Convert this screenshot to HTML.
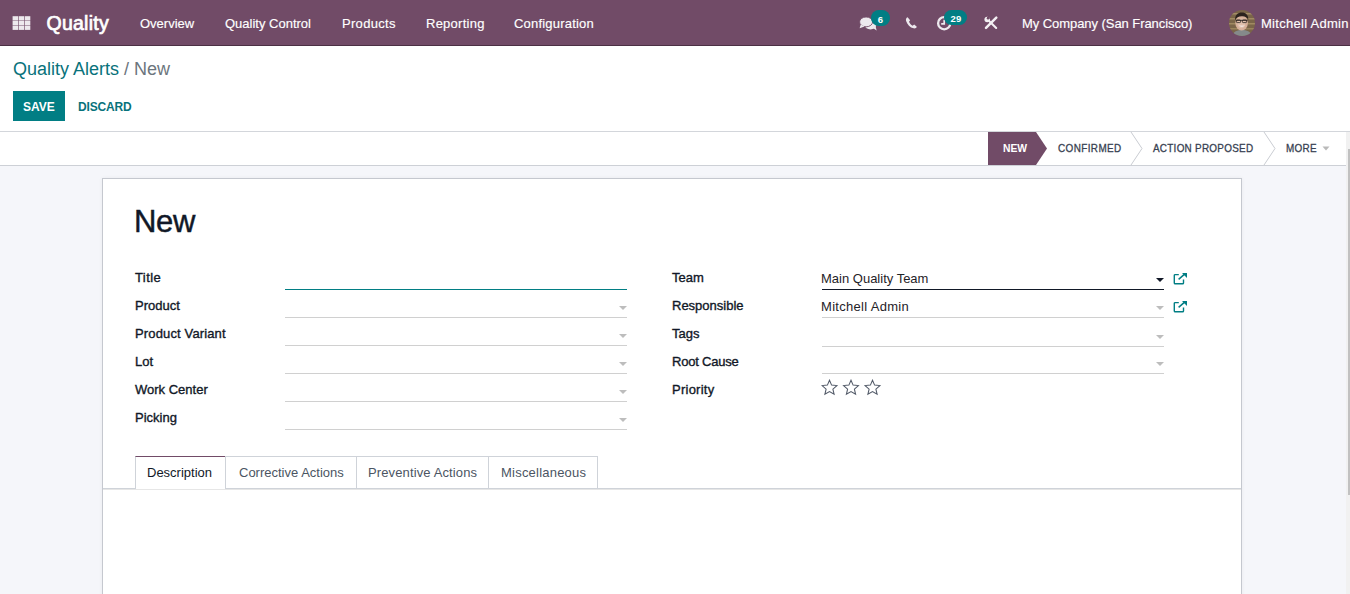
<!DOCTYPE html>
<html><head><meta charset="utf-8">
<style>
html,body{margin:0;padding:0;width:1350px;height:594px;overflow:hidden;background:#fff;font-family:"Liberation Sans",sans-serif;}
.a{position:absolute;}
.t{position:absolute;line-height:1;white-space:nowrap;}
#nav{left:0;top:0;width:1350px;height:45px;background:#714B67;border-bottom:1px solid #4b3044;}
.nv{color:#fff;font-size:13px;top:17px;-webkit-text-stroke:0.15px #fff;}
#cp{left:0;top:46px;width:1350px;height:85px;background:#fff;border-bottom:1px solid #d3d6db;}
#sb{left:0;top:132px;width:1346px;height:33px;background:#fff;border-bottom:1px solid #cdd0d6;}
#bg{left:0;top:166px;width:1346px;height:428px;background:#f5f6fa;}
#track{left:1346px;top:132px;width:4px;height:462px;background:#f1f1f1;}
#thumb{left:1348px;top:149px;width:2px;height:346px;background:#c1c1c1;}
#sheet{left:102px;top:178px;width:1138px;height:420px;background:#fff;border:1px solid #c5c8cf;box-shadow:0 0 4px rgba(0,0,0,0.05);}
.lbl{font-size:13px;font-weight:400;color:#111827;-webkit-text-stroke:0.35px #111827;}
.ln{position:absolute;height:1px;background:#d0d0d0;}
.car{position:absolute;width:0;height:0;border-left:4px solid transparent;border-right:4px solid transparent;border-top:4px solid #bdbdbd;}
.val{font-size:13px;color:#1f2328;}
.tab{position:absolute;top:456px;height:32px;border:1px solid #cfd3d9;border-bottom:none;box-sizing:border-box;background:#fff;}
.tabt{font-size:13px;color:#4b5563;}
.st{font-size:11px;color:#374151;letter-spacing:0.3px;-webkit-text-stroke:0.3px #374151;transform:scaleX(0.9);transform-origin:0 0;}
</style></head><body>

<!-- NAVBAR -->
<div id="nav" class="a"></div>
<!-- grid icon -->
<svg class="a" style="left:0;top:0" width="40" height="40" viewBox="0 0 40 40"><g fill="#ede9ed"><rect x="12.6" y="16.2" width="5.5" height="4.3"/><rect x="18.7" y="16.2" width="5.5" height="4.3"/><rect x="24.8" y="16.2" width="5.5" height="4.3"/><rect x="12.6" y="20.9" width="5.5" height="4.3"/><rect x="18.7" y="20.9" width="5.5" height="4.3"/><rect x="24.8" y="20.9" width="5.5" height="4.3"/><rect x="12.6" y="25.6" width="5.5" height="4.3"/><rect x="18.7" y="25.6" width="5.5" height="4.3"/><rect x="24.8" y="25.6" width="5.5" height="4.3"/></g></svg>
<div class="t" style="left:46.5px;top:14px;font-size:19.5px;font-weight:400;color:#fff;-webkit-text-stroke:0.7px #fff;letter-spacing:0.25px">Quality</div>
<div class="t nv" style="left:140px;">Overview</div>
<div class="t nv" style="left:225px;">Quality Control</div>
<div class="t nv" style="left:342px;letter-spacing:0.3px">Products</div>
<div class="t nv" style="left:426px;letter-spacing:0.25px">Reporting</div>
<div class="t nv" style="left:514px;letter-spacing:0.2px">Configuration</div>


<!-- nav icons -->
<svg class="a" style="left:855px;top:6px" width="150" height="30" viewBox="855 6 150 30">
<!-- comments -->
<g fill="#ede9ee">
<ellipse cx="870.5" cy="25.6" rx="5.6" ry="3.9"/>
<path d="M872.5,27.8 L876.6,30.4 L875.6,26.2 Z"/>
<ellipse cx="866.1" cy="21.9" rx="6.5" ry="4.9" stroke="#714B67" stroke-width="0.9"/>
<path d="M860.8,24.6 L859.6,28.3 L864.6,26.5 Z"/>
</g>
<rect x="871" y="10" width="19" height="16" rx="8" fill="#017E84"/>
<!-- phone -->
<path d="M907.6,17.3 C906.2,17.9 905.6,19.2 906.1,20.9 C907.3,24.6 910,27.4 913.6,28.3 C915.2,28.6 916.4,28 916.8,26.8 L914.2,24.6 L912.6,25.7 C911,25 909.5,23.2 909,21.8 L910.1,20.2 Z" fill="#ede9ee"/>
<!-- clock -->
<circle cx="944.2" cy="23.2" r="6.1" fill="none" stroke="#ede9ee" stroke-width="2.3"/>
<path d="M944.2,19.8 V23.9 H941.2" fill="none" stroke="#ede9ee" stroke-width="1.7"/>
<rect x="944" y="10" width="23" height="15" rx="7.5" fill="#017E84"/>
<!-- tools -->
<path d="M988.6,20.6 L996.2,28" stroke="#f3f0f3" stroke-width="2.1" stroke-linecap="round"/>
<circle cx="987.2" cy="19.6" r="2.75" fill="#f3f0f3"/>
<circle cx="988.1" cy="18.2" r="1.35" fill="#714B67"/>
<path d="M987.6,17.6 L989.4,16.2 L989.6,18.9 Z" fill="#714B67"/>
<path d="M987.6,24.4 L989.6,26.2" stroke="#714B67" stroke-width="1.2"/>
<path d="M996.3,17.6 L986,27.9" stroke="#f3f0f3" stroke-width="2.5" stroke-linecap="round"/>
</svg>
<div class="t" style="left:877.8px;top:14.8px;font-size:9.5px;font-weight:700;color:#fff;">6</div>
<div class="t" style="left:950.5px;top:14.3px;font-size:9.5px;font-weight:700;color:#fff;letter-spacing:0.1px">29</div>
<!-- avatar -->
<svg class="a" style="left:1229px;top:10px" width="26" height="26" viewBox="0 0 26 26">
<defs><clipPath id="av"><circle cx="13" cy="13" r="13"/></clipPath></defs>
<g clip-path="url(#av)">
<rect width="26" height="26" fill="#7a6548"/>
<rect x="0" y="3" width="26" height="1.5" fill="#a38d66"/>
<rect x="0" y="8" width="26" height="1.5" fill="#a08a62"/>
<rect x="0" y="13" width="26" height="1.5" fill="#a08a62"/>
<rect x="0" y="18" width="26" height="1.5" fill="#9a845c"/>
<path d="M3,27 C4,21.5 8,20 13,20 C18,20 22,21.5 23,27 Z" fill="#858a8b"/>
<ellipse cx="12.6" cy="12.8" rx="6.3" ry="7.6" fill="#d6b09a"/>
<ellipse cx="12.4" cy="13.5" rx="4" ry="5" fill="#e0c0ac"/>
<path d="M6.2,10.5 C5.6,5 9,2.4 12.8,2.4 C16.8,2.4 19.8,4.8 19.2,10.5 C18.6,7.4 16.2,6.2 12.8,6.3 C9.4,6.3 7.2,7.6 6.2,10.5 Z" fill="#2b221d"/>
<path d="M6.8,10.3 H18.6" stroke="#2a2420" stroke-width="0.9"/>
<rect x="7.4" y="10" width="4.2" height="2.6" rx="0.8" fill="none" stroke="#2a2420" stroke-width="0.8"/>
<rect x="13.4" y="10" width="4.2" height="2.6" rx="0.8" fill="none" stroke="#2a2420" stroke-width="0.8"/>
<path d="M9.8,15.6 C11.5,17.4 14.2,17.4 15.8,15.6 Z" fill="#f2e6df"/>
</g>
</svg>
<div class="t nv" style="left:1022px;letter-spacing:-0.06px">My Company (San Francisco)</div>
<div class="t nv" style="left:1261px;letter-spacing:0.28px">Mitchell Admin</div>

<!-- CONTROL PANEL -->
<div id="cp" class="a"></div>
<div class="t" style="left:13px;top:60px;font-size:18px;color:#08727b;">Quality Alerts</div>
<div class="t" style="left:124px;top:60px;font-size:18px;color:#6c757d;">/ New</div>
<div class="a" style="left:13px;top:91px;width:52px;height:30px;background:#017E84;"></div>
<div class="t" style="left:23px;top:101px;font-size:12px;font-weight:700;color:#fff;">SAVE</div>
<div class="t" style="left:78px;top:101px;font-size:12px;font-weight:700;color:#08727b;letter-spacing:-0.15px">DISCARD</div>

<!-- STATUS BAR -->
<div id="sb" class="a"></div>

<!-- statusbar pills -->
<svg class="a" style="left:0;top:132px" width="1346" height="33" viewBox="0 0 1346 33">
<polygon points="988,0 1036,0 1047,16.5 1036,33 988,33" fill="#714B67"/>
<polyline points="1131,0 1142,16.5 1131,33" fill="none" stroke="#c9ccd2" stroke-width="1"/>
<polyline points="1264,0 1275,16.5 1264,33" fill="none" stroke="#c9ccd2" stroke-width="1"/>
<polygon points="1322.5,14.5 1329.5,14.5 1326,18.5" fill="#b9b9b9"/>
</svg>
<div class="t" style="left:1002.5px;top:143px;font-size:11px;font-weight:700;color:#fff;transform:scaleX(0.94);transform-origin:0 0">NEW</div>
<div class="t st" style="left:1058px;top:143px;letter-spacing:0.45px">CONFIRMED</div>
<div class="t st" style="left:1153px;top:143px;">ACTION PROPOSED</div>
<div class="t st" style="left:1286px;top:143px;">MORE</div>
<div id="bg" class="a"></div>
<div id="track" class="a"></div>
<div id="thumb" class="a"></div>

<!-- SHEET -->
<div id="sheet" class="a"></div>
<div class="t" style="left:134px;top:206px;font-size:31px;color:#111827;-webkit-text-stroke:0.45px #111827;letter-spacing:-0.3px">New</div>


<!-- left labels -->
<div class="t lbl" style="left:135px;top:271px;letter-spacing:0.4px">Title</div>
<div class="t lbl" style="left:135px;top:299px;">Product</div>
<div class="t lbl" style="left:135px;top:327px;letter-spacing:0.14px">Product Variant</div>
<div class="t lbl" style="left:135px;top:355px;">Lot</div>
<div class="t lbl" style="left:135px;top:383px;">Work Center</div>
<div class="t lbl" style="left:135px;top:411px;">Picking</div>
<!-- left inputs -->
<div class="ln" style="left:285px;top:289px;width:342px;background:#017E84;"></div>
<div class="ln" style="left:285px;top:317px;width:342px;"></div>
<div class="ln" style="left:285px;top:345px;width:342px;"></div>
<div class="ln" style="left:285px;top:373px;width:342px;"></div>
<div class="ln" style="left:285px;top:401px;width:342px;"></div>
<div class="ln" style="left:285px;top:429px;width:342px;"></div>
<div class="car" style="left:619px;top:306px;"></div>
<div class="car" style="left:619px;top:334px;"></div>
<div class="car" style="left:619px;top:362px;"></div>
<div class="car" style="left:619px;top:390px;"></div>
<div class="car" style="left:619px;top:418px;"></div>
<!-- right labels -->
<div class="t lbl" style="left:672px;top:271px;">Team</div>
<div class="t lbl" style="left:672px;top:299px;">Responsible</div>
<div class="t lbl" style="left:672px;top:327px;">Tags</div>
<div class="t lbl" style="left:672px;top:355px;letter-spacing:-0.2px">Root Cause</div>
<div class="t lbl" style="left:672px;top:383px;letter-spacing:0.25px">Priority</div>
<!-- right inputs -->
<div class="t val" style="left:821px;top:272px;">Main Quality Team</div>
<div class="t val" style="left:821px;top:300px;letter-spacing:0.3px">Mitchell Admin</div>
<div class="ln" style="left:822px;top:289px;width:342px;background:#111827;"></div>
<div class="ln" style="left:822px;top:317px;width:342px;"></div>
<div class="ln" style="left:822px;top:346px;width:342px;"></div>
<div class="ln" style="left:822px;top:373px;width:342px;"></div>
<div class="car" style="left:1156px;top:278px;border-top-color:#111827;"></div>
<div class="car" style="left:1156px;top:306px;"></div>
<div class="car" style="left:1156px;top:335px;"></div>
<div class="car" style="left:1156px;top:362px;"></div>
<!-- external link icons -->
<svg class="a" style="left:1172px;top:272px" width="16" height="13" viewBox="0 0 16 13">
<path d="M6.8,2.6 H3.2 Q2.3,2.6 2.3,3.5 V10.9 Q2.3,11.8 3.2,11.8 H10.6 Q11.5,11.8 11.5,10.9 V7.6" fill="none" stroke="#017E84" stroke-width="1.4"/>
<path d="M6.6,7.4 L13.2,1.6" fill="none" stroke="#017E84" stroke-width="1.5"/>
<polygon points="10,0.9 15,0.9 15,5.9" fill="#017E84"/>
</svg>
<svg class="a" style="left:1172px;top:300px" width="16" height="13" viewBox="0 0 16 13">
<path d="M6.8,2.6 H3.2 Q2.3,2.6 2.3,3.5 V10.9 Q2.3,11.8 3.2,11.8 H10.6 Q11.5,11.8 11.5,10.9 V7.6" fill="none" stroke="#017E84" stroke-width="1.4"/>
<path d="M6.6,7.4 L13.2,1.6" fill="none" stroke="#017E84" stroke-width="1.5"/>
<polygon points="10,0.9 15,0.9 15,5.9" fill="#017E84"/>
</svg>
<!-- stars -->
<svg class="a" style="left:821px;top:378.8px" width="64" height="18" viewBox="0 0 64 18"><path transform="translate(0,0)" d="M8.5,1.2 L10.6,6.1 L15.9,6.6 L11.9,10.1 L13.1,15.3 L8.5,12.6 L3.9,15.3 L5.1,10.1 L1.1,6.6 L6.4,6.1 Z" fill="none" stroke="#525a68" stroke-width="1.05"/><path transform="translate(21.5,0)" d="M8.5,1.2 L10.6,6.1 L15.9,6.6 L11.9,10.1 L13.1,15.3 L8.5,12.6 L3.9,15.3 L5.1,10.1 L1.1,6.6 L6.4,6.1 Z" fill="none" stroke="#525a68" stroke-width="1.05"/><path transform="translate(43,0)" d="M8.5,1.2 L10.6,6.1 L15.9,6.6 L11.9,10.1 L13.1,15.3 L8.5,12.6 L3.9,15.3 L5.1,10.1 L1.1,6.6 L6.4,6.1 Z" fill="none" stroke="#525a68" stroke-width="1.05"/></svg>
<!-- notebook -->
<div class="ln" style="left:103px;top:488px;width:1138px;background:#cfd3d9;"></div>
<div class="ln" style="left:103px;top:489px;width:1138px;background:#e6e6e6;"></div>
<div class="tab" style="left:135px;width:91px;border-top:1px solid #714B67;height:33px;"></div>
<div class="tab" style="left:225px;width:132px;"></div>
<div class="tab" style="left:356px;width:133px;"></div>
<div class="tab" style="left:488px;width:110px;"></div>
<div class="t tabt" style="left:147px;top:466px;color:#111827;">Description</div>
<div class="t tabt" style="left:239px;top:466px;">Corrective Actions</div>
<div class="t tabt" style="left:368px;top:466px;letter-spacing:0.12px">Preventive Actions</div>
<div class="t tabt" style="left:501px;top:466px;letter-spacing:0.22px">Miscellaneous</div>

</body></html>
